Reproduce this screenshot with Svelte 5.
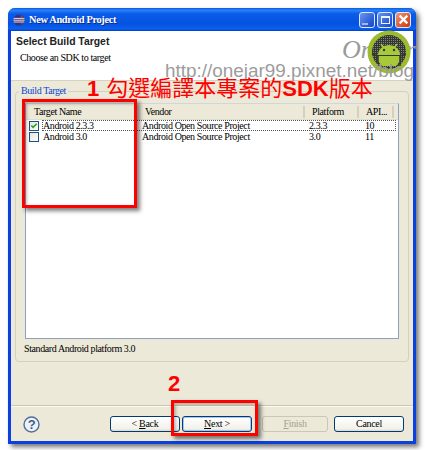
<script>
  const columns = ["Target Name", "Vendor", "Platform", "API..."];
  const rows = [
    { name: "Android 2.3.3", vendor: "Android Open Source Project", platform: "2.3.3", api: "10", checked: true },
    { name: "Android 3.0", vendor: "Android Open Source Project", platform: "3.0", api: "11", checked: false }
  ];
</script>

<div class="page">
  <div class="window">
    <header class="titlebar">
      <svg class="eclipse" viewBox="0 0 12 12" width="12" height="12">
        <circle cx="6" cy="6" r="5.5" fill="#3b2f78" />
        <path d="M0.6 4.4h10.8M0.4 6.2h11.2M0.8 8h10.4" stroke="#f3f1fa" stroke-width="0.9" />
        <path d="M7 1.2a5 5 0 0 1 0 9.6a6 6 0 0 0 0-9.6z" fill="#d98a3a" opacity="0.55" />
      </svg>
      <span class="title">New Android Project</span>
      <div class="controls">
        <div class="ctl"><span class="min"></span></div>
        <div class="ctl"><span class="max"></span></div>
        <div class="ctl close">
          <svg viewBox="0 0 10 10" width="11" height="11">
            <path d="M1.5 1.5l7 7M8.5 1.5l-7 7" stroke="#fff" stroke-width="2" />
          </svg>
        </div>
      </div>
    </header>

    <section class="banner">
      <h1>Select Build Target</h1>
      <p>Choose an SDK to target</p>
    </section>

    <main class="body">
      <fieldset class="group">
        <legend>Build Target</legend>
        <div class="table">
          <div class="row head">
            {#each columns as col}
              <div class="th">{col}</div>
            {/each}
          </div>
          {#each rows as row, i}
            <div class="row item">
              <div class="namecell">
                <span class="check">
                  {#if row.checked}
                    <svg viewBox="0 0 9 9" width="9" height="9">
                      <path d="M1.5 4.5l2 2l4-4" fill="none" stroke="#21a121" stroke-width="1.8" />
                    </svg>
                  {/if}
                </span>
                <span class="cellname">{row.name}</span>
              </div>
              <div class="vendor">{row.vendor}</div>
              <div class="platform">{row.platform}</div>
              <div class="api">{row.api}</div>
              {#if i === 0}<span class="focus"></span>{/if}
            </div>
          {/each}
        </div>
        <div class="status">Standard Android platform 3.0</div>
      </fieldset>

      <footer class="footer">
        <svg class="help" viewBox="0 0 17 17" width="17" height="17">
          <circle cx="8.5" cy="8.5" r="7.5" fill="#eef1f6" stroke="#4f6f9c" stroke-width="1.4" />
          <text x="8.5" y="13" text-anchor="middle" class="q">?</text>
        </svg>
        <div class="buttons">
          <button class="btn back">&lt; <u>B</u>ack</button>
          <button class="btn next"><u>N</u>ext &gt;</button>
          <button class="btn finish" disabled><u>F</u>inish</button>
          <button class="btn cancel">Cancel</button>
        </div>
      </footer>
    </main>
  </div>

  <!-- watermark and red annotations painted over the screenshot -->
  <div class="brand">Onejar</div>
  <svg class="logo" viewBox="0 0 44 44" width="44" height="44">
    <defs>
      <pattern id="grid" width="2" height="2" patternUnits="userSpaceOnUse">
        <rect width="2" height="2" fill="#34372f" />
        <rect width="1" height="1" fill="#7e857a" />
      </pattern>
    </defs>
    <circle cx="22" cy="22" r="21.5" fill="#9dbb2e" />
    <circle cx="22" cy="22" r="17" fill="url(#grid)" />
    <path d="M11 25a11 10 0 0 1 22 0z" fill="#a8c93a" />
    <path d="M11 26h22v5l-4 5h-14l-4-5z" fill="#a8c93a" />
    <path d="M14 14l3 4M30 14l-3 4" stroke="#a8c93a" stroke-width="1.5" />
    <circle cx="17" cy="20" r="1.2" fill="#34372f" />
    <circle cx="27" cy="20" r="1.2" fill="#34372f" />
    <path d="M5 24l6 2v10M39 24l-6 2v10" fill="none" stroke="#34372f" stroke-width="1.5" />
  </svg>
  <div class="url">http://onejar99.pixnet.net/blog</div>
  <div class="note one">
    <span class="num">1</span>
    <span>勾選編譯本專案的<b>SDK</b>版本</span>
  </div>
  <div class="note two">2</div>
  <div class="mark target"></div>
  <div class="mark nextmark"></div>
</div>

<style>
  :global(body) {
    background: #fff;
  }

  .page {
    width: 425px;
    height: 450px;
    padding: 8px 9px 9px 8px;
    box-sizing: border-box;
    position: relative;
    overflow: hidden;
    font-family: "Liberation Serif", serif;
    font-size: 10px;
    letter-spacing: -0.4px;
    color: #000;
  }

  .window {
    height: 433px;
    display: flex;
    flex-direction: column;
    border: solid #0a3fe0;
    border-width: 0 3px 3px 3px;
    border-radius: 7px 7px 0 0;
    background: #ece9d8;
    box-shadow: 3px 3px 5px rgba(0, 0, 0, 0.55);
  }

  .titlebar {
    height: 23px;
    flex: none;
    margin: 0 -3px;
    padding: 0 5px;
    display: flex;
    align-items: center;
    gap: 4px;
    border-radius: 7px 7px 0 0;
    background: linear-gradient(to bottom, #0a5ae0 0%, #2a80fa 10%, #0a5ce8 25%, #0553e0 70%, #0a60f0 90%, #0340c8 100%);
    color: #fff;
  }

  .title {
    font-weight: bold;
    font-size: 10.4px;
    letter-spacing: -0.35px;
    text-shadow: 1px 1px 0 #0a2a90;
  }

  .controls {
    margin-left: auto;
    display: flex;
    gap: 2px;
  }

  .ctl {
    width: 16px;
    height: 16px;
    box-sizing: border-box;
    border: 1px solid #dfe8fb;
    border-radius: 3px;
    background: linear-gradient(135deg, #6a95ee, #2a5bd8 70%, #1d48c0);
    display: flex;
    align-items: center;
    justify-content: center;
  }

  .ctl.close {
    background: linear-gradient(135deg, #ef9a7c, #dc5a30 60%, #c23c14);
  }

  .min {
    width: 6px;
    height: 2px;
    background: #9fb8f0;
    margin: 8px 4px 0 0;
  }

  .max {
    width: 9px;
    height: 8px;
    border: 1px solid #eef3ff;
    border-top-width: 2px;
    box-sizing: border-box;
  }

  .banner {
    height: 50px;
    flex: none;
    box-sizing: border-box;
    background: #fff;
    padding: 4px 0 0 5px;
    border-bottom: 1px solid #d5d2c0;
  }

  h1 {
    margin: 0;
    font: bold 10.4px/14px "Liberation Sans", sans-serif;
    letter-spacing: 0;
    color: #222;
  }

  .banner p {
    margin: 2px 0 0 4px;
    line-height: 13px;
  }

  .body {
    flex: 1;
    display: flex;
    flex-direction: column;
    min-height: 0;
  }

  .group {
    margin: 4px 4px 0 4px;
    padding: 6px 9px 0 9px;
    height: 277px;
    box-sizing: border-box;
    border: 1px solid #d3d0bd;
    border-radius: 4px;
    min-width: 0;
  }

  legend {
    margin-left: -6px;
    padding: 0 2px;
    line-height: 12px;
    color: #0a46d5;
  }

  .table {
    height: 236px;
    box-sizing: border-box;
    background: #fff;
    border: 1px solid #8ba1bd;
    border-top-color: #cfd6dc;
  }

  .row {
    display: grid;
    grid-template-columns: 112px 167px 54px 35px;
    position: relative;
  }

  .head {
    height: 16px;
    align-items: center;
    background: #ece9d8;
    box-shadow: inset 0 -1px 0 #e0ddcb;
  }

  .th {
    height: 12px;
    line-height: 12px;
    padding-left: 7px;
    border-right: 2px solid #d3d0bd;
    white-space: nowrap;
    overflow: hidden;
  }

  .th:first-child {
    padding-left: 8px;
    border-right-color: transparent;
  }

  .item {
    height: 11px;
    line-height: 11px;
    white-space: nowrap;
  }

  .namecell {
    display: flex;
    align-items: center;
    padding-left: 3px;
    gap: 4px;
  }

  .check {
    width: 10px;
    height: 10px;
    flex: none;
    box-sizing: border-box;
    border: 1px solid #1c5180;
    background: linear-gradient(135deg, #e4e3dc, #fff);
    display: flex;
    align-items: center;
    justify-content: center;
  }

  .vendor,
  .platform {
    padding-left: 4px;
  }

  .api {
    padding-left: 6px;
  }

  .focus {
    position: absolute;
    left: 16px;
    right: 2px;
    top: 0;
    bottom: 0;
    border: 1px dotted #555;
    pointer-events: none;
  }

  .status {
    margin: 3px 0 0 -1px;
    line-height: 14px;
  }

  .footer {
    margin-top: auto;
    height: 36px;
    flex: none;
    box-sizing: border-box;
    border-top: 1px solid #c9c6b4;
    box-shadow: inset 0 1px 0 #fbfaf4;
    padding: 10px 9px 0 12px;
    display: flex;
    align-items: flex-start;
    justify-content: space-between;
  }

  .help {
    flex: none;
  }

  .q {
    font: bold 13px "Liberation Sans", sans-serif;
    fill: #3e5f90;
  }

  .buttons {
    display: flex;
  }

  .btn {
    width: 70px;
    height: 16px;
    padding: 0;
    box-sizing: border-box;
    border: 1px solid #003c74;
    border-radius: 3px;
    background: linear-gradient(to bottom, #fff, #f2f1ea 85%, #dcd8c8);
    font: 10px/14px "Liberation Serif", serif;
    letter-spacing: -0.3px;
    color: #000;
  }

  .next {
    margin-left: 2px;
    box-shadow: inset 0 0 0 1px #a9c4ee;
  }

  .finish {
    width: 66px;
    margin-left: 10px;
    border-color: #c9c7ba;
    background: #ece9d8;
    color: #a5a28f;
  }

  .cancel {
    margin-left: 6px;
  }

  .brand {
    position: absolute;
    left: 342px;
    top: 37px;
    font: italic 26px/26px "Liberation Serif", serif;
    letter-spacing: 0;
    color: #9a9a9a;
  }

  .logo {
    position: absolute;
    left: 367px;
    top: 30px;
  }

  .url {
    position: absolute;
    left: 165px;
    top: 59px;
    font: 18.9px/23px "Liberation Sans", sans-serif;
    letter-spacing: 0;
    color: #9c9c9c;
    white-space: nowrap;
  }

  .note {
    position: absolute;
    display: flex;
    align-items: center;
    gap: 7px;
    color: #f00;
    white-space: nowrap;
    letter-spacing: 0;
    font-family: "Liberation Sans", "Noto Sans CJK TC", sans-serif;
  }

  .note.one {
    left: 87px;
    top: 76px;
    font-size: 22px;
    line-height: 25px;
  }

  .num {
    font-weight: bold;
  }

  .note.two {
    left: 168px;
    top: 371px;
    font-size: 22px;
    line-height: 25px;
    font-weight: bold;
  }

  .mark {
    position: absolute;
    box-sizing: border-box;
    border: 3px solid #f00;
    box-shadow: 3px 3px 4px rgba(0, 0, 0, 0.5), inset 2px 2px 3px rgba(0, 0, 0, 0.25);
  }

  .target {
    left: 22px;
    top: 99px;
    width: 115px;
    height: 109px;
  }

  .nextmark {
    left: 171px;
    top: 400px;
    width: 87px;
    height: 36px;
  }
</style>
